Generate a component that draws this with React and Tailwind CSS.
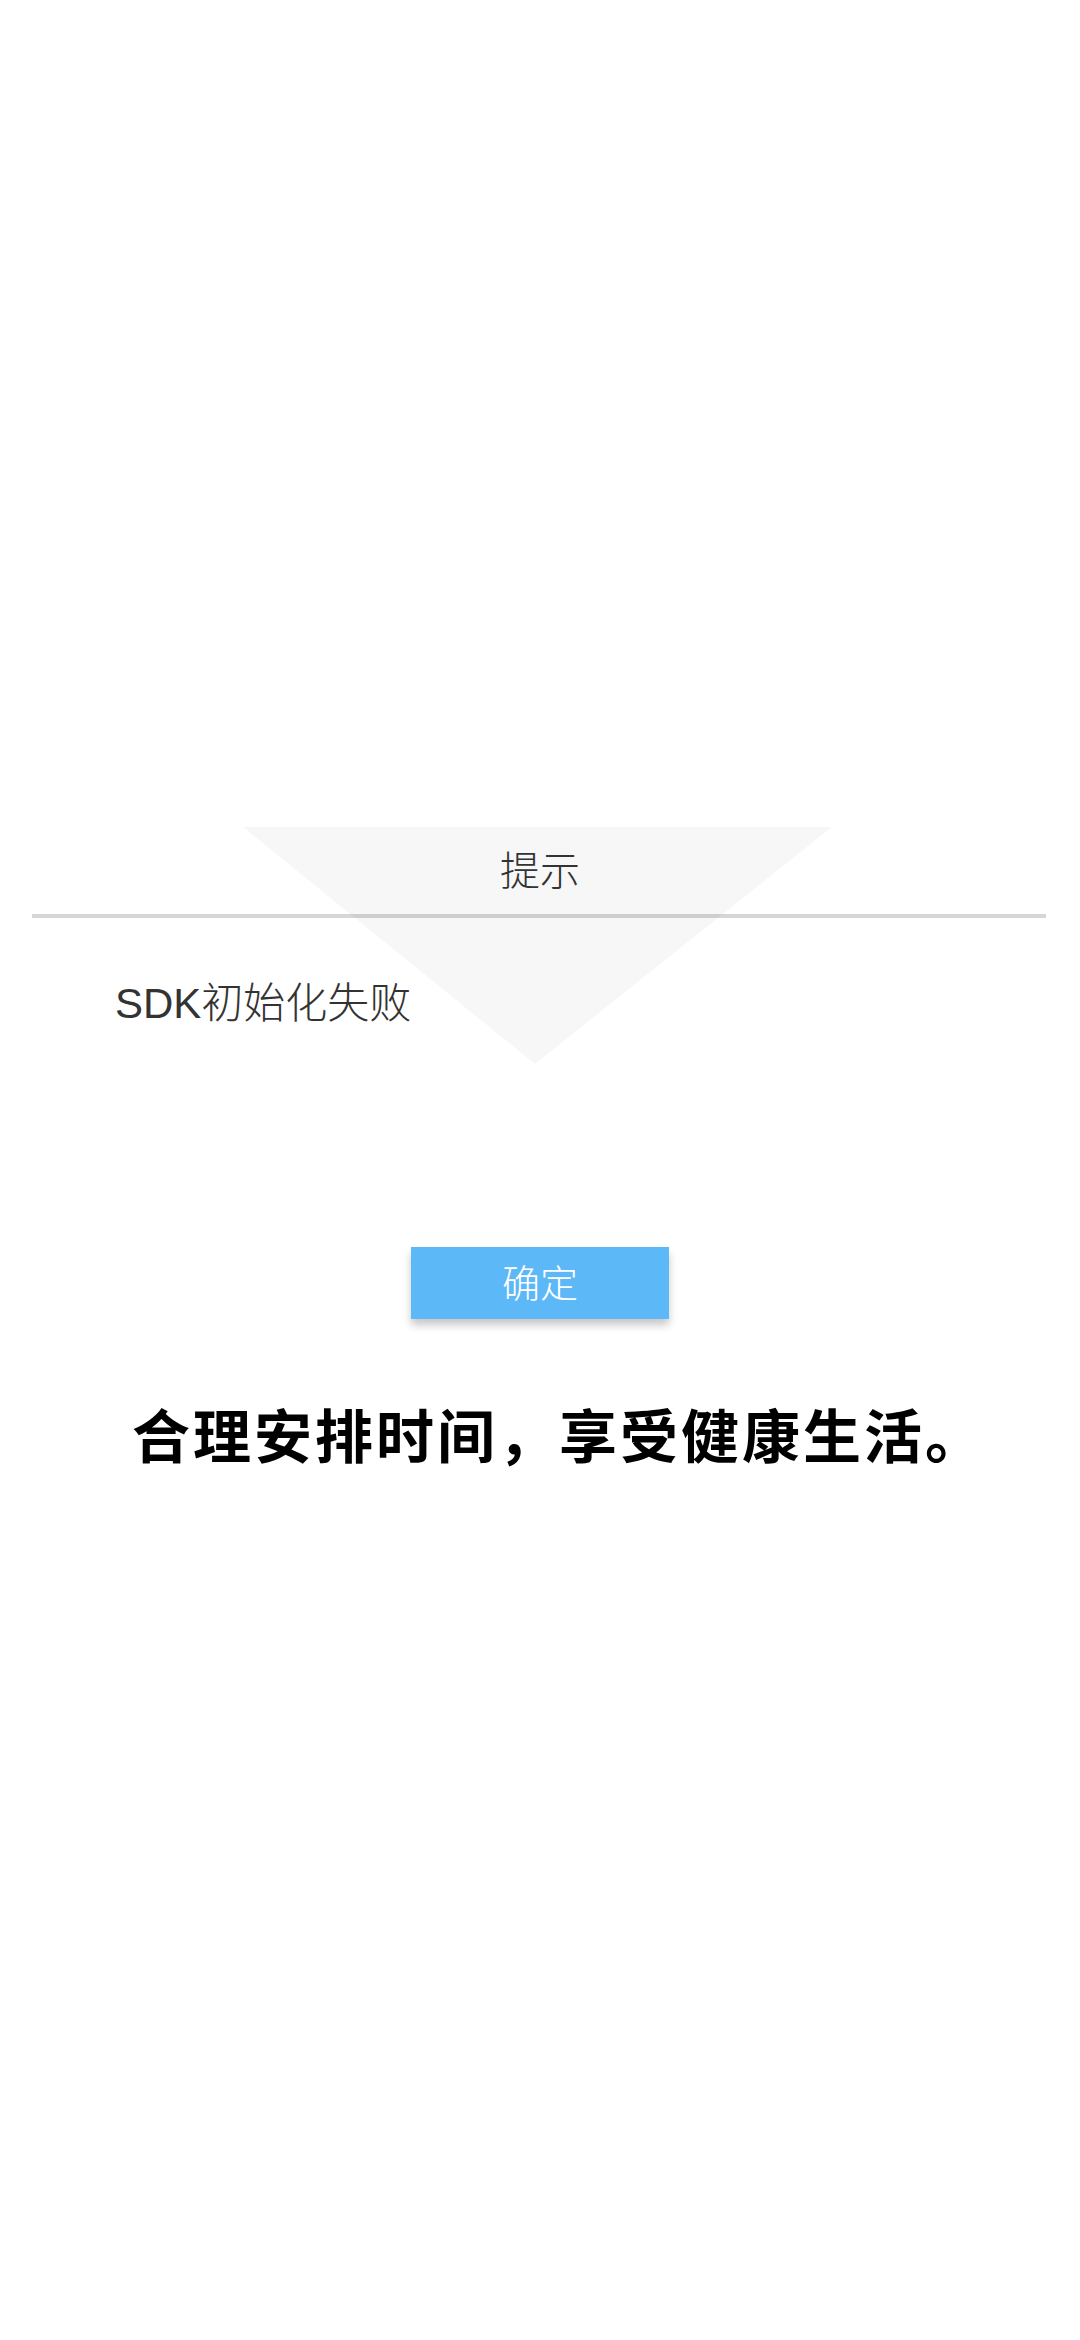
import React from "react";

const font = { fontFamily: '"Noto Sans CJK SC", "Noto Sans", sans-serif' };
const bodyFont = {
  fontFamily: '"Liberation Sans", "Noto Sans CJK SC", sans-serif',
};

const App = () => {
  return (
    <div className="min-h-[2340px] w-[1080px] bg-white" style={font}>
      {/* dialog */}
      <div className="relative pt-[827px]">
        {/* faded triangle behind the dialog */}
        <svg
          className="absolute left-[243px] top-[827px]"
          width="589"
          height="237"
          viewBox="0 0 589 237"
        >
          <polygon points="0,0 589,0 292,237" fill="#f7f7f7" />
        </svg>

        <div className="relative">
          <div className="h-[87px] pb-[6px] flex items-center justify-center text-[40px] leading-none font-light text-[#333333]">
            提示
          </div>
          <div className="ml-[32px] mr-[34px] h-[4px] bg-black/[0.16]"></div>
          <p
            className="pt-[58px] pl-[115px] text-[42px] leading-[56px] font-light text-[#333333]"
            style={bodyFont}
          >
            SDK初始化失败
          </p>
        </div>
      </div>

      <div className="mt-[215px] flex justify-center">
        <button className="w-[258px] h-[72px] pb-[5px] bg-[#5cb8f7] text-white text-[38px] leading-none font-light shadow-[0_6px_8px_rgba(0,0,0,0.22)]">
          确定
        </button>
      </div>

      <p className="mt-[73px] pl-[132px] text-[58px] leading-[82px] tracking-[3px] font-bold text-black">
        合理安排时间，享受健康生活。
      </p>
    </div>
  );
};

export default App;
